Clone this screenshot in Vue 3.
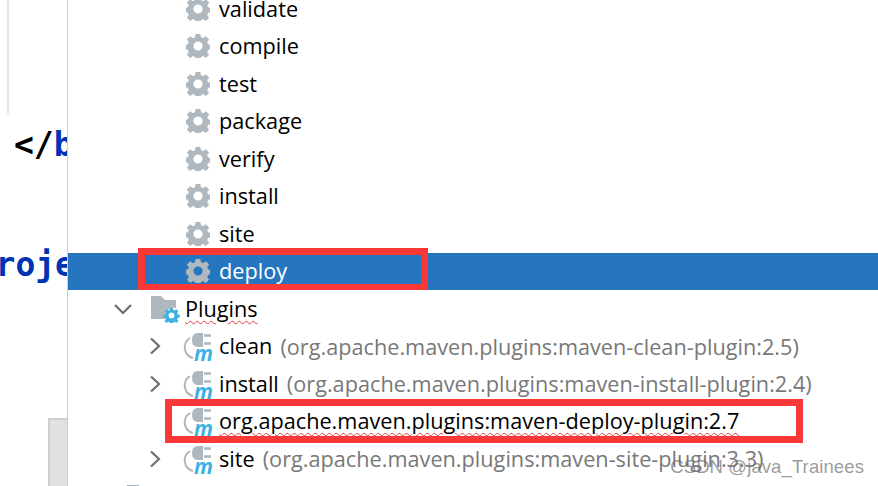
<script setup>
const phases = ['validate', 'compile', 'test', 'package', 'verify', 'install', 'site', 'deploy']
const plugins = [
  { name: 'clean', coord: '(org.apache.maven.plugins:maven-clean-plugin:2.5)', arrow: true },
  { name: 'install', coord: '(org.apache.maven.plugins:maven-install-plugin:2.4)', arrow: true },
  { name: 'org.apache.maven.plugins:maven-deploy-plugin:2.7', coord: '', arrow: false, squiggle: true },
  { name: 'site', coord: '(org.apache.maven.plugins:maven-site-plugin:3.3)', arrow: true }
]
const gearPath = 'M8.800 0h4.400l.5 3a8 8 0 0 1 2 .8l2.500-1.800 3 3-1.800 2.500a8 8 0 0 1 .9 2l3 .5v4l-3 .5a8 8 0 0 1-.9 2l1.800 2.500-3 3-2.500-1.800a8 8 0 0 1-2 .8l-.5 3H8.800l-.5-3a8 8 0 0 1-2-.8l-2.500 1.800-3-3 1.800-2.500a8 8 0 0 1-.9-2l-3-.5v-4l3-.5a8 8 0 0 1 .9-2L.8 5l3-3 2.500 1.800a8 8 0 0 1 2-.8zM11 6.800a4.200 4.200 0 1 0 0 8.400 4.200 4.200 0 0 0 0-8.400z'
</script>

<template>
  <div class="page">
    <div class="editor">
      <div class="guide"></div>
      <div class="code close-tag">&lt;/<span class="kw">b</span></div>
      <div class="code project"><span class="kw">roje</span></div>
      <div class="scroll-thumb"></div>
    </div>

    <div class="tree">
      <div
        v-for="p in phases"
        :key="p"
        class="row phase"
        :class="{ selected: p === 'deploy' }"
      >
        <svg class="gear" width="24" height="24" viewBox="0 0 22 22">
          <path :d="gearPath" fill="#afb8bf" fill-rule="evenodd" />
        </svg>
        <span class="label">{{ p }}</span>
      </div>

      <div class="row plugins-row">
        <svg class="chev" width="20" height="14" viewBox="0 0 20 14">
          <path d="M2 3l8 8 8-8" fill="none" stroke="#6e6e6e" stroke-width="2.200" />
        </svg>
        <svg class="folder" width="30" height="28" viewBox="0 0 30 28">
          <path d="M1 1h10l4 4h11v8a9 9 0 0 0-11 11H1z" fill="#afb8bf" />
          <path :d="gearPath" fill="#3fb2e2" fill-rule="evenodd" transform="translate(14 13) scale(.68)" />
        </svg>
        <span class="label squiggle">Plugins</span>
      </div>

      <div v-for="pl in plugins" :key="pl.name" class="row plugin-row">
        <svg v-if="pl.arrow" class="chev-right" width="12" height="18" viewBox="0 0 12 18">
          <path d="M2 1.500l8 7.500-8 7.500" fill="none" stroke="#6e6e6e" stroke-width="2.200" />
        </svg>
        <div v-else class="chev-right"></div>
        <svg class="plug" width="28" height="28" viewBox="0 0 28 28">
          <path d="M6 6a11 11 0 0 0 3 20" fill="none" stroke="#afb8bf" stroke-width="2" />
          <path d="M8 8q0-7 6-7h5v14h-5q-6 0-6-7z" fill="#afb8bf" />
          <path d="M20 3.500h7M20 11.500h7" stroke="#afb8bf" stroke-width="2.500" />
          <text x="10" y="29" class="m">m</text>
        </svg>
        <span class="label" :class="{ squiggle: pl.squiggle }">{{ pl.name }}</span>
        <span v-if="pl.coord" class="coord">{{ pl.coord }}</span>
      </div>

      <div class="row next-row">
        <svg width="16" height="30" viewBox="0 0 16 30">
          <path d="M0 8l4-4h12v26H0z" fill="#afb8bf" />
        </svg>
      </div>
    </div>

    <div class="mark mark-deploy"></div>
    <div class="mark mark-plugin"></div>
    <div class="watermark">CSDN @java_Trainees</div>
  </div>
</template>

<style scoped>
.page {
  position: relative;
  display: flex;
  width: 878px;
  height: 486px;
  overflow: hidden;
  background: #fff;
  font-family: "Open Sans", "Noto Sans", sans-serif;
  color: #000;
}
.editor {
  position: relative;
  flex: 0 0 67px;
  overflow: hidden;
  border-right: 1px solid #cdcdcd;
}
.guide {
  position: absolute;
  left: 7px;
  top: 0;
  width: 2px;
  height: 114px;
  background: #e8e8e8;
}
.code {
  position: absolute;
  font-family: "DejaVu Sans Mono", monospace;
  font-size: 33px;
  font-weight: 700;
  line-height: 40px;
  white-space: nowrap;
}
.close-tag {
  left: 14px;
  top: 125px;
}
.project {
  right: 0;
  top: 245px;
  margin-right: -8px;
}
.kw {
  color: #0033b3;
}
.scroll-thumb {
  position: absolute;
  left: 48px;
  top: 418px;
  width: 19px;
  height: 68px;
  background: #e1e1e1;
  border: 2px solid #cfcfcf;
  border-width: 2px 0 0 2px;
  box-sizing: border-box;
}
.tree {
  flex: 1;
  margin-top: -10px;
}
.row {
  display: flex;
  align-items: center;
  height: 37.500px;
  font-size: 21.700px;
  white-space: nowrap;
}
.label {
  position: relative;
  top: -0.500px;
}
.phase {
  padding-left: 118px;
}
.gear {
  margin-right: 9px;
}
.selected {
  background: #2675bf;
  color: #fff;
}
.plugins-row {
  padding-left: 45px;
}
.chev {
  margin-right: 17px;
}
.folder {
  margin-right: 5px;
}
.plugin-row {
  padding-left: 81px;
}
.chev-right {
  width: 12px;
  margin-right: 23px;
}
.plug {
  margin-right: 7px;
  overflow: visible;
}
.m {
  font-family: "Open Sans", sans-serif;
  font-size: 21px;
  font-weight: 700;
  font-style: italic;
  fill: #3fb2e2;
}
.coord {
  margin-left: 8px;
  color: #787878;
}
.squiggle {
  text-decoration: underline wavy #e53935 1px;
  text-underline-offset: 3px;
}
.next-row {
  padding-left: 55px;
}
.mark {
  position: absolute;
  box-sizing: border-box;
  border: 7px solid #fb3838;
}
.mark-deploy {
  left: 138px;
  top: 248px;
  width: 290px;
  height: 42px;
  border-bottom-width: 6px;
}
.mark-plugin {
  left: 165px;
  top: 399px;
  width: 638px;
  height: 44px;
}
.watermark {
  position: absolute;
  right: 14px;
  top: 456px;
  font-family: "Liberation Sans", sans-serif;
  font-size: 18.500px;
  letter-spacing: 0.100px;
  line-height: 22px;
  color: rgba(110, 110, 110, 0.7);
}
</style>
